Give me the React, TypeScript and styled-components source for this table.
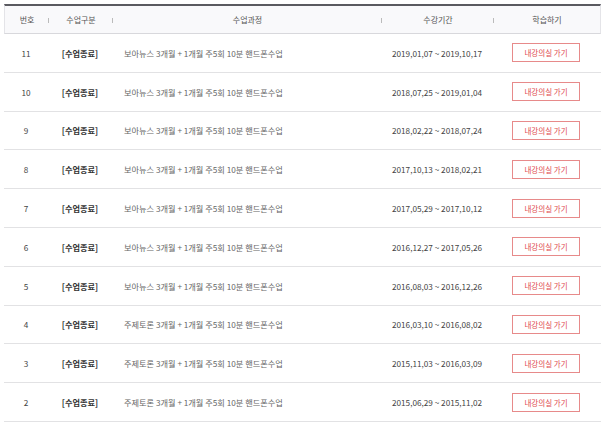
import React from "react";
import styled, { createGlobalStyle } from "styled-components";

const Global = createGlobalStyle`
  html, body { margin: 0; padding: 0; background: #ffffff; }
  body { font-family: "Noto Sans CJK KR", "Noto Sans", sans-serif; }
`;

const Wrap = styled.div`
  padding: 4px 1px 0 4px;
  width: 602px;
  box-sizing: border-box;
`;

const cols = "44px 64px 269px 112px 1fr";

const Head = styled.div`
  display: grid;
  grid-template-columns: ${cols};
  height: 27px;
  border-top: 2px solid #5a5a60;
  border-bottom: 1px solid #d8d8dc;
  border-left: 1px solid #e4e4e8;
  border-right: 1px solid #e4e4e8;
  background: #f9f9fb;
`;

const HeadCell = styled.div<{ $sep?: boolean }>`
  position: relative;
  display: flex;
  align-items: center;
  justify-content: center;
  font-size: 8px;
  color: #555;
  &::after {
    content: "";
    display: ${(p) => (p.$sep ? "block" : "none")};
    position: absolute;
    right: 0;
    top: 50%;
    margin-top: -2px;
    width: 1px;
    height: 5px;
    background: #bbb;
  }
`;

const Row = styled.div`
  display: grid;
  grid-template-columns: ${cols};
  height: 37.8px;
  border-bottom: 1px solid #e2e2e4;
  align-items: center;
  font-size: 8.2px;
`;

const Cell = styled.div<{ $align?: "left" | "center"; $bold?: boolean; $color?: string }>`
  padding-left: ${(p) => (p.$align === "left" ? "12px" : "0")};
  font-weight: ${(p) => (p.$bold ? 700 : 400)};
  color: ${(p) => p.$color || "#555"};
  white-space: nowrap;
  display: flex;
  justify-content: ${(p) => (p.$align === "left" ? "flex-start" : "center")};
  align-items: center;
`;

const Btn = styled.button`
  width: 68px;
  height: 19px;
  margin-right: 2px;
  border: 1px solid #e78a8a;
  background: #fff;
  color: #e0484d;
  font-family: "Noto Sans CJK KR", "Noto Sans", sans-serif;
  font-size: 7.5px;
  padding: 0;
  cursor: pointer;
`;

const rows = [
  { n: 11, c: "보아뉴스 3개월 + 1개월 주5회 10분 핸드폰수업", d: "2019,01,07 ~ 2019,10,17" },
  { n: 10, c: "보아뉴스 3개월 + 1개월 주5회 10분 핸드폰수업", d: "2018,07,25 ~ 2019,01,04" },
  { n: 9, c: "보아뉴스 3개월 + 1개월 주5회 10분 핸드폰수업", d: "2018,02,22 ~ 2018,07,24" },
  { n: 8, c: "보아뉴스 3개월 + 1개월 주5회 10분 핸드폰수업", d: "2017,10,13 ~ 2018,02,21" },
  { n: 7, c: "보아뉴스 3개월 + 1개월 주5회 10분 핸드폰수업", d: "2017,05,29 ~ 2017,10,12" },
  { n: 6, c: "보아뉴스 3개월 + 1개월 주5회 10분 핸드폰수업", d: "2016,12,27 ~ 2017,05,26" },
  { n: 5, c: "보아뉴스 3개월 + 1개월 주5회 10분 핸드폰수업", d: "2016,08,03 ~ 2016,12,26" },
  { n: 4, c: "주제토론 3개월 + 1개월 주5회 10분 핸드폰수업", d: "2016,03,10 ~ 2016,08,02" },
  { n: 3, c: "주제토론 3개월 + 1개월 주5회 10분 핸드폰수업", d: "2015,11,03 ~ 2016,03,09" },
  { n: 2, c: "주제토론 3개월 + 1개월 주5회 10분 핸드폰수업", d: "2015,06,29 ~ 2015,11,02" },
];

export default function App() {
  return (
    <Wrap>
      <Global />
      <Head>
        <HeadCell $sep>번호</HeadCell>
        <HeadCell $sep>수업구분</HeadCell>
        <HeadCell $sep>수업과정</HeadCell>
        <HeadCell $sep>수강기간</HeadCell>
        <HeadCell>학습하기</HeadCell>
      </Head>
      {rows.map((r) => (
        <Row key={r.n}>
          <Cell $color="#444">{r.n}</Cell>
          <Cell $bold $color="#333">[수업종료]</Cell>
          <Cell $align="left" $color="#666">{r.c}</Cell>
          <Cell $color="#444">{r.d}</Cell>
          <Cell>
            <Btn>내강의실 가기</Btn>
          </Cell>
        </Row>
      ))}
    </Wrap>
  );
}
